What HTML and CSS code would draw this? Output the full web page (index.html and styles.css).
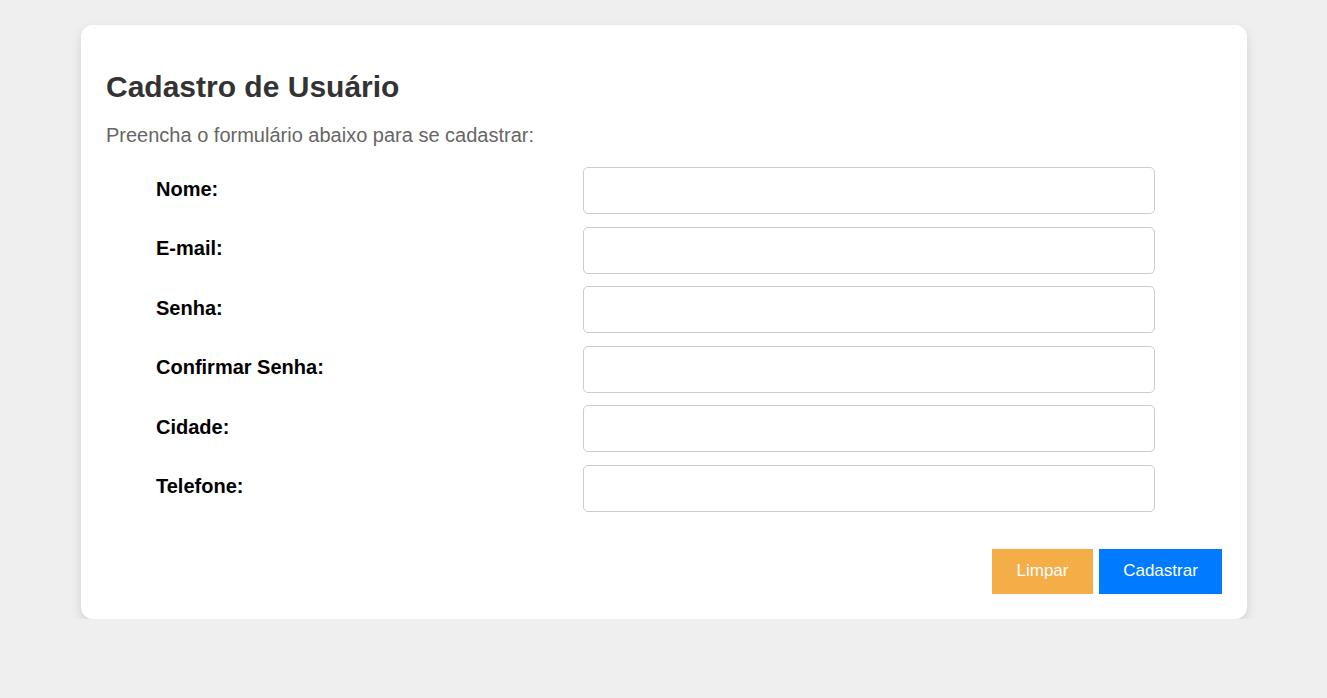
FILE: index.html
```html
<!DOCTYPE html>
<html lang="pt-BR">
<head>
<meta charset="utf-8">
<title>Cadastro de Usuário</title>
<link rel="stylesheet" href="styles.css">
</head>
<body>
<div class="card">
  <h1 class="title">Cadastro de Usuário</h1>
  <p class="subtitle">Preencha o formulário abaixo para se cadastrar:</p>
  <form class="form">
    <div class="fields">
      <label class="label" for="nome">Nome:</label>
      <input class="input" id="nome" type="text">
      <label class="label" for="email">E-mail:</label>
      <input class="input" id="email" type="email">
      <label class="label" for="senha">Senha:</label>
      <input class="input" id="senha" type="password">
      <label class="label" for="conf">Confirmar Senha:</label>
      <input class="input" id="conf" type="password">
      <label class="label" for="cidade">Cidade:</label>
      <input class="input" id="cidade" type="text">
      <label class="label" for="tel">Telefone:</label>
      <input class="input" id="tel" type="tel">
    </div>
    <div class="actions">
      <button class="btn btn-clear" type="reset">Limpar</button>
      <button class="btn btn-submit" type="submit">Cadastrar</button>
    </div>
  </form>
</div>
</body>
</html>
```
FILE: styles.css
```css
* { box-sizing: border-box; }
html, body {
  margin: 0;
  padding: 0;
}
body {
  background: #efefef;
  font-family: "Liberation Sans", Arial, sans-serif;
  padding: 25px 80px 0 81px;
}
.card {
  width: 1166px;
  height: 594px;
  background: #fff;
  border-radius: 12px;
  box-shadow: 0 5px 12px rgba(0, 0, 0, 0.12);
  padding: 43px 25px 25px 25px;
}
.title {
  margin: 0;
  font-size: 30px;
  font-weight: bold;
  color: #333;
  line-height: 38px;
}
.subtitle {
  margin: 17px 0 0 0;
  font-size: 20px;
  color: #666;
  line-height: 24px;
}
.form {
  margin-top: 20px;
}
.fields {
  display: grid;
  grid-template-columns: 427px 572px;
  row-gap: 12.6px;
  padding-left: 50px;
  align-items: center;
}
.label {
  font-size: 20px;
  font-weight: bold;
  color: #000;
  padding-bottom: 3px;
}
.input {
  height: 47px;
  width: 572px;
  border: 1px solid #ccc;
  border-radius: 5px;
  padding: 0 12px;
  font-size: 16px;
  font-family: inherit;
  background: #fff;
}
.actions {
  display: flex;
  justify-content: flex-end;
  gap: 6px;
  margin-top: 37px;
}
.btn {
  height: 45px;
  border: none;
  border-radius: 0;
  color: #fff;
  font-size: 17px;
  font-family: inherit;
  padding: 0;
  cursor: pointer;
}
.btn-clear {
  background: #f4ad47;
  width: 101px;
}
.btn-submit {
  background: #007bff;
  width: 123px;
}
```
